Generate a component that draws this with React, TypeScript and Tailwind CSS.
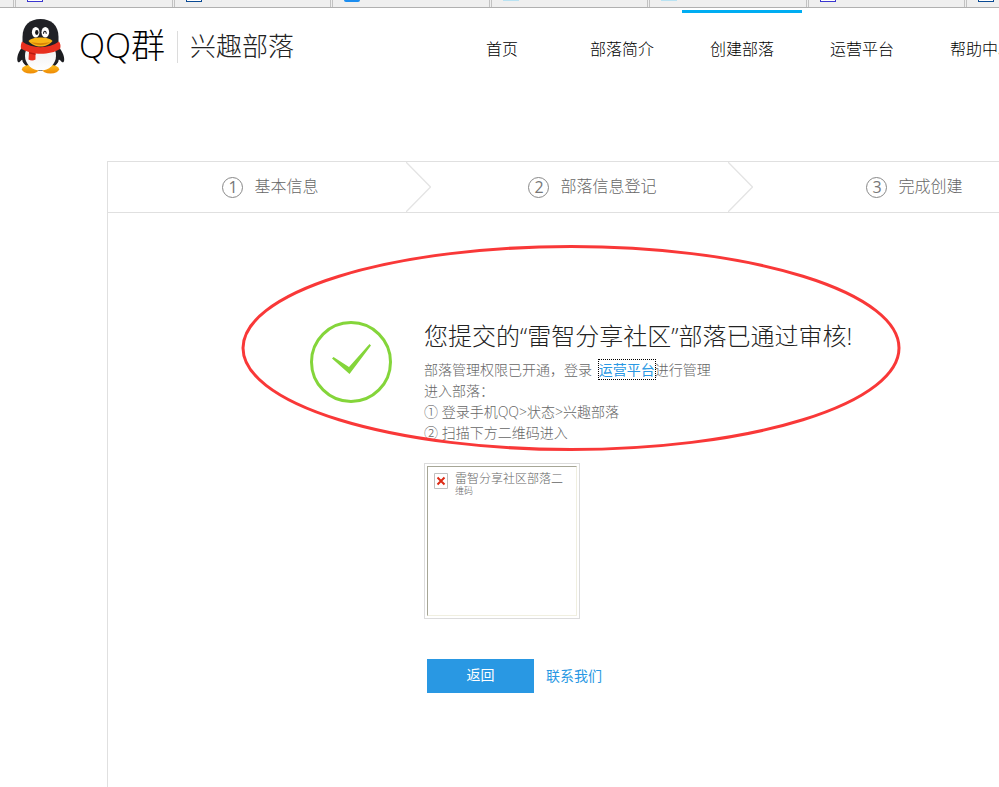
import React from "react";

interface TabProps {
  id: number;
  icon: string;
}

const tabs: TabProps[] = [
  { id: 1, icon: "h-0.5 border-x border-b border-[#3a36d0] bg-white" },
  { id: 2, icon: "h-0.5 border-x border-b border-[#0a4a94] bg-white" },
  { id: 3, icon: "h-0.5 rounded-b bg-[#1b8df0]" },
  { id: 4, icon: "h-px bg-[#b9e2f2]" },
  { id: 5, icon: "h-px bg-[#b9e2f2]" },
  { id: 6, icon: "h-0.5 border-x border-b border-[#3a36d0] bg-white" },
  { id: 7, icon: "h-0.5 border-x border-b border-[#0a4a94] bg-white" },
];

const navItems = ["首页", "部落简介", "创建部落", "运营平台", "帮助中心"];

const steps = ["基本信息", "部落信息登记", "完成创建"];

const Penguin = () => (
  <svg viewBox="0 0 48 56" className="h-14 w-12 shrink-0" aria-hidden="true">
    <defs>
      <linearGradient id="belly" x1="0" y1="0" x2="0" y2="1">
        <stop offset="0" stopColor="#ececec" />
        <stop offset="1" stopColor="#ffffff" />
      </linearGradient>
      <linearGradient id="foot" x1="0" y1="0" x2="0" y2="1">
        <stop offset="0" stopColor="#fcbc1c" />
        <stop offset="1" stopColor="#ee8a06" />
      </linearGradient>
    </defs>
    <path d="M7 26C2 31 0 37 0.3 41C0.6 44 2.4 44 4 41.5L9 38Z" fill="#1c1d21" />
    <path d="M40 26C45 31 47.5 37 47.2 41C47 44 45 44 43.5 41.5L38 38Z" fill="#1c1d21" />
    <ellipse cx="23.5" cy="37" rx="19" ry="14.8" fill="#1f2024" />
    <path d="M5.5 42C8 48 16 52 23.5 52C31 52 39 48 41.5 42Z" fill="#1f2024" />
    <ellipse cx="13.5" cy="50.3" rx="8.6" ry="4.2" fill="url(#foot)" />
    <ellipse cx="33.5" cy="50.3" rx="8.6" ry="4.2" fill="url(#foot)" />
    <ellipse cx="23.5" cy="36.8" rx="15.5" ry="14.8" fill="url(#belly)" />
    <path d="M5.5 24V18C5.5 6 13 0 23.5 0C34 0 41.5 6 41.5 18V24C37 29 30 31 23.5 31C17 31 10 29 5.5 24Z" fill="#202126" />
    <ellipse cx="18.7" cy="13.3" rx="3.8" ry="5.2" fill="#fff" />
    <ellipse cx="28.3" cy="13.3" rx="3.8" ry="5.2" fill="#fff" />
    <ellipse cx="19.8" cy="13.5" rx="1.7" ry="2.4" fill="#16171b" />
    <path d="M26.5 14.8C26.7 11.4 29 11.4 29.3 14.8" fill="none" stroke="#16171b" strokeWidth="1.1" />
    <path d="M11.5 22C14 19.3 19 18.6 23.5 18.6C28 18.6 33 19.3 35.5 22C33 25.5 28 27.5 23.5 27.5C19 27.5 14 25.5 11.5 22Z" fill="#f9b415" />
    <path d="M14 23C19 24.5 28 24.5 33 23C29 27 18 27 14 23Z" fill="#d98207" />
    <path d="M5 22.5C15 30 32 30 42 22.5C43.5 25 44 27 43 30C37 34 27 35.5 18.5 34.5V40.5C16 42 13.5 41.5 11.5 40.5L12 33C9 32 6 31 4 29.5C3.5 27 4 25 5 22.5Z" fill="#e8301f" />
    <path d="M12 33L18.5 34.5V36L12 34.5Z" fill="#b71b12" />
  </svg>
);

const TabStrip = () => (
  <div className="flex h-2 border-b border-[#b0b0b0] bg-[#efefef]">
    <div className="w-3.5 shrink-0 border-r border-[#c2c2c2]" />
    <div className="flex w-[1110px] shrink-0">
      {tabs.map((tab) => (
        <div key={tab.id} className="ml-px flex-1 border-x border-[#c2c2c2] pl-[11px]">
          <div className={`w-4 ${tab.icon}`} />
        </div>
      ))}
    </div>
  </div>
);

const Header = () => (
  <header className="flex h-[153px] items-start pl-[17px]">
    <a href="#home" className="mt-[11px] flex w-[425px] shrink-0 items-center text-black">
      <Penguin />
      <span className="ml-3.5 flex h-10 items-center pb-1 font-['Open_Sans','Noto_Sans_CJK_SC',sans-serif] text-[34px] leading-10 font-light">
        QQ<span>群</span>
      </span>
      <span className="ml-3 h-8 w-px bg-[#dcdcdc]" />
      <span className="ml-3 text-[26px] leading-8 font-light text-[#222]">兴趣部落</span>
    </a>
    <nav className="flex pt-0.5">
      {navItems.map((item) => (
        <a
          key={item}
          href={`#${item}`}
          className={`h-16 w-[120px] shrink-0 border-t-[3px] pt-[25px] text-center text-base leading-6 font-light text-black ${
            item === "创建部落" ? "border-[#00adf2]" : "border-transparent"
          }`}
        >
          {item}
        </a>
      ))}
    </nav>
  </header>
);

const Steps = () => (
  <ol className="flex h-[52px] border-y border-[#e0e0e0]">
    {steps.map((step, index) => (
      <li
        key={step}
        className="relative flex w-[322px] shrink-0 items-center justify-center gap-[11px] pl-[3px] font-light text-[#666]"
      >
        <span className="flex size-[21px] items-center justify-center rounded-full border border-[#888] font-['Open_Sans',sans-serif] text-base leading-5 font-normal text-[#777]">
          {index + 1}
        </span>
        <span>{step}</span>
        {index < steps.length - 1 && (
          <svg viewBox="0 0 25 50" className="absolute top-0 -right-px h-[50px] w-[25px]" aria-hidden="true">
            <path d="M0 0L24.5 25L0 50" fill="none" stroke="#e4e4e4" strokeWidth="1.3" />
          </svg>
        )}
      </li>
    ))}
  </ol>
);

const QrCode = () => (
  <div className="mt-5 size-[156px] border border-[#dcdcdc] p-0.5">
    <div className="flex h-full gap-[7px] border border-t-[#a6a696] border-r-[#f0efe0] border-b-[#f0efe0] border-l-[#a6a696] pt-1.5 pl-1.5">
      <svg viewBox="0 0 14 16" className="h-4 w-3.5 shrink-0" aria-hidden="true">
        <path d="M0.5 0.5H13.5V15.5H0.5Z" fill="#fff" stroke="#c0c0c0" />
        <path d="M3.5 4.5L10.5 11.5M10.5 4.5L3.5 11.5" stroke="#dd2b16" strokeWidth="2" />
      </svg>
      <p className="text-xs leading-3 font-light text-[#666]">
        雷智分享社区部落二
        <span className="block text-[9px]">维码</span>
      </p>
    </div>
  </div>
);

const Result = () => (
  <section className="relative flex pt-[104px] pl-[202px]">
    <svg viewBox="0 0 82 82" className="mt-1 size-[82px] shrink-0" aria-hidden="true">
      <circle cx="41" cy="41" r="39.5" fill="none" stroke="#84d53a" strokeWidth="3" />
      <path d="M22 37.5L23.5 36L39 46L59.5 23L61 24.5L39.5 53Z" fill="#84d53a" />
    </svg>
    <div className="ml-8">
      <h1 className="font-['Open_Sans','Noto_Sans_CJK_SC',sans-serif] text-2xl leading-[38px] font-light text-[#222]">
        您提交的“雷智分享社区”部落已通过审核!
      </h1>
      <div className="mt-1 font-['Open_Sans','Noto_Sans_CJK_SC',sans-serif] text-sm leading-[21px] font-light text-[#666]">
        <p>
          部落管理权限已开通，登录{" "}
          <a
            href="#platform"
            className="ml-[3px] font-normal text-[#2998e3] outline-1 outline-black outline-dotted"
          >
            运营平台
          </a>
          进行管理
        </p>
        <p>进入部落：</p>
        <p>① 登录手机QQ&gt;状态&gt;兴趣部落</p>
        <p>② 扫描下方二维码进入</p>
      </div>
      <QrCode />
      <div className="mt-10 ml-[3px] flex items-center gap-3 text-sm">
        <button type="button" className="h-[34px] w-[107px] bg-[#2998e3] pb-0.5 text-white">
          返回
        </button>
        <a href="#contact" className="text-[#2998e3]">
          联系我们
        </a>
      </div>
    </div>
    <svg
      viewBox="0 0 660 206"
      className="pointer-events-none absolute top-8 left-[133px] h-[206px] w-[660px]"
      aria-hidden="true"
    >
      <ellipse cx="330" cy="103" rx="328" ry="101.5" fill="none" stroke="#f93838" strokeWidth="3" />
    </svg>
  </section>
);

const App = () => {
  return (
    <div className="flex min-h-screen flex-col overflow-hidden bg-white font-['Liberation_Sans','Noto_Sans_CJK_SC',sans-serif]">
      <TabStrip />
      <Header />
      <main className="ml-[107px] min-w-[968px] flex-1 border-l border-[#e0e0e0]">
        <Steps />
        <Result />
      </main>
    </div>
  );
};

export default App;
